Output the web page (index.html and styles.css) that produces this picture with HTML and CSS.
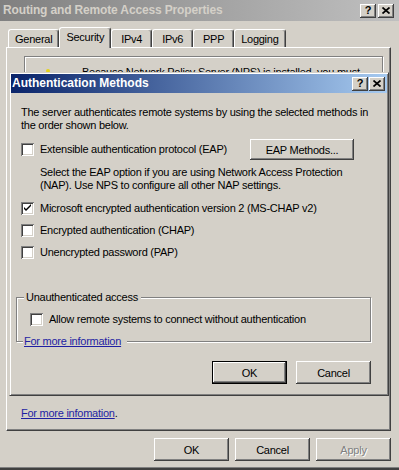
FILE: index.html
```html
<!DOCTYPE html>
<html lang="en">
<head>
<meta charset="UTF-8">
<title>Routing and Remote Access Properties</title>
<link rel="stylesheet" href="styles.css">
</head>
<body>
<div class="window">
    <div class="titlebar inactive">
        <span class="caption">Routing and Remote Access Properties</span>
        <div class="capbtns">
            <span class="capbtn">?</span>
            <span class="capbtn"><svg width="8" height="7" viewBox="0 0 8 7"><path d="M0.5 0.5 L7.5 6.5 M7.5 0.5 L0.5 6.5" stroke="#000" stroke-width="1.7"/></svg></span>
        </div>
    </div>

    <div class="tabs">
        <div class="tab">General</div>
        <div class="tab selected">Security</div>
        <div class="tab">IPv4</div>
        <div class="tab">IPv6</div>
        <div class="tab">PPP</div>
        <div class="tab">Logging</div>
    </div>

    <div class="panel">
        <div class="etched nps">
            <svg class="nps-icon" width="16" height="20" viewBox="0 0 16 20"><circle cx="8" cy="3" r="2" fill="#e6d21a"/><path d="M8 5 L15 18 H1 Z" fill="#e6d21a"/></svg>
            <p class="nps-text">Because Network Policy Server (NPS) is installed, you must</p>
        </div>
        <p class="panel-link"><a href="#">For more infomation</a>.</p>
    </div>

    <div class="footer">
        <button class="btn">OK</button>
        <button class="btn">Cancel</button>
        <button class="btn" disabled>Apply</button>
    </div>
</div>

<!-- modal dialog floating over the properties window -->
<div class="dialog">
    <div class="titlebar active">
        <span class="caption">Authentication Methods</span>
        <div class="capbtns">
            <span class="capbtn">?</span>
            <span class="capbtn"><svg width="8" height="7" viewBox="0 0 8 7"><path d="M0.5 0.5 L7.5 6.5 M7.5 0.5 L0.5 6.5" stroke="#000" stroke-width="1.7"/></svg></span>
        </div>
    </div>

    <div class="dlg-body">
        <p class="intro">The server authenticates remote systems by using the selected methods in<br>the order shown below.</p>

        <div class="eap-row">
            <label class="check"><span class="box"></span>Extensible authentication protocol (EAP)</label>
            <button class="btn wide">EAP Methods...</button>
        </div>
        <p class="note">Select the EAP option if you are using Network Access Protection<br>(NAP). Use NPS to configure all other NAP settings.</p>

        <label class="check row1"><span class="box"><svg width="13" height="13" viewBox="0 0 13 13"><path d="M3 5 V7 L5 9 L10 4 V2 L5 7 Z" fill="#000"/></svg></span>Microsoft encrypted authentication version 2 (MS-CHAP v2)</label>
        <label class="check row"><span class="box"></span>Encrypted authentication (CHAP)</label>
        <label class="check row"><span class="box"></span>Unencrypted password (PAP)</label>

        <div class="etched unauth">
            <span class="group-label">Unauthenticated access</span>
            <label class="check allow"><span class="box"></span>Allow remote systems to connect without authentication</label>
            <a href="#" class="group-link">For more information</a>
        </div>

        <div class="dlg-buttons">
            <button class="btn default">OK</button>
            <button class="btn">Cancel</button>
        </div>
    </div>
</div>
</body>
</html>
```

FILE: styles.css
```css
*{
    box-sizing: border-box;
}
body{
    margin: 0;
    width: 399px;
    height: 470px;
    overflow: hidden;
    position: relative;
    background-color: #d4d0c8;
    font-family: "Liberation Sans", Arial, sans-serif;
    font-size: 11px;
    line-height: 13px;
    letter-spacing: -0.25px;
    color: #000;
}
p{
    margin: 0;
}
a{
    color: #1f1fa3;
}

.window{
    height: 470px;
    border-bottom: 2px solid #404040;
    box-shadow: inset 0 -1px #808080;
}

/* title bars */
.titlebar{
    display: flex;
    align-items: center;
    justify-content: space-between;
}
.titlebar.inactive{
    height: 21px;
    padding: 0 5px 0 3px;
    background: linear-gradient(to right, #808080, #c0c0c0);
    color: #d4d0c8;
}
.titlebar.active{
    height: 19px;
    padding: 0 2px 0 1px;
    background: linear-gradient(to right, #0a246a, #a6caf0);
    color: #fff;
}
.caption{
    font-weight: bold;
    font-size: 12px;
    letter-spacing: 0;
}
.inactive .caption{
    letter-spacing: -0.15px;
}
.capbtns{
    display: flex;
    gap: 1px;
}
.inactive .capbtns{
    gap: 2px;
}
.capbtn{
    width: 16px;
    height: 14px;
    display: flex;
    align-items: center;
    justify-content: center;
    background-color: #d4d0c8;
    color: #000;
    font-weight: bold;
    font-size: 11px;
    letter-spacing: 0;
    box-shadow: inset -1px -1px #404040, inset 1px 1px #fff, inset -2px -2px #808080;
}

/* tabs */
.tabs{
    display: flex;
    align-items: flex-end;
    height: 20px;
    margin-top: 6px;
    padding-left: 8px;
}
.tab{
    height: 18px;
    min-width: 41px;
    padding: 3px 6px 0 6px;
    text-align: center;
    background-color: #d4d0c8;
    border-top: 1px solid #fff;
    border-left: 1px solid #fff;
    border-right: 1px solid #404040;
    border-radius: 3px 3px 0 0;
    box-shadow: inset -1px 0 #808080;
}
.tab.selected{
    height: 21px;
    margin-bottom: -1px;
    position: relative;
    z-index: 1;
}

.panel{
    display: flex;
    flex-direction: column;
    height: 384px;
    margin: 0 8px 0 6px;
    padding: 8px 7px 10px 14px;
    border-top: 1px solid #fff;
    border-left: 1px solid #fff;
    border-right: 1px solid #404040;
    border-bottom: 1px solid #404040;
    box-shadow: inset -1px -1px #808080;
}
.etched{
    border: 1px solid #808080;
    box-shadow: inset 1px 1px #fff, 1px 1px #fff;
}
.nps{
    display: flex;
    height: 120px;
    margin-left: 3px;
    padding: 9px 0 0 15px;
}
.nps-icon{
    margin-top: 2px;
}
.nps-text{
    margin-left: 26px;
}
.panel-link{
    margin-top: auto;
}

.footer{
    display: flex;
    justify-content: flex-end;
    gap: 6px;
    padding: 7px 8px 0 0;
}
.btn{
    width: 75px;
    height: 23px;
    padding: 0;
    border: none;
    background-color: #d4d0c8;
    font-family: "Liberation Sans", Arial, sans-serif;
    font-size: 11px;
    letter-spacing: inherit;
    color: #000;
    box-shadow: inset -1px -1px #404040, inset 1px 1px #fff, inset -2px -2px #808080, inset 2px 2px #d4d0c8;
}
.btn:disabled{
    color: #808080;
    text-shadow: 1px 1px #fff;
}
.btn.wide{
    width: 104px;
    height: 21px;
}
.btn.default{
    border: 1px solid #000;
}

/* dialog */
.dialog{
    position: absolute;
    left: 9px;
    top: 72px;
    width: 380px;
    height: 324px;
    padding: 1px;
    background-color: #d4d0c8;
    border: 1px solid;
    border-color: #d4d0c8 #404040 #404040 #d4d0c8;
    box-shadow: inset 1px 1px #fff, inset -1px -1px #808080;
    z-index: 2;
}
.dlg-body{
    display: flex;
    flex-direction: column;
    padding: 13px 16px 0 5px;
}
.intro{
    margin-left: 5px;
    white-space: nowrap;
}
.eap-row{
    display: flex;
    align-items: center;
    justify-content: space-between;
    height: 21px;
    margin: 7px 17px 0 5px;
}
.note{
    margin: 6px 0 0 24px;
    white-space: nowrap;
}
.check{
    display: flex;
    align-items: center;
    gap: 6px;
    height: 13px;
    white-space: nowrap;
}
.row1{
    margin: 10px 0 0 5px;
}
.row{
    margin: 9px 0 0 5px;
}
.box{
    width: 13px;
    height: 13px;
    flex: none;
    background-color: #fff;
    box-shadow: inset 1px 1px #808080, inset -1px -1px #fff, inset 2px 2px #404040, inset -2px -2px #d4d0c8;
}
.box svg{
    display: block;
}

.unauth{
    display: flex;
    flex-direction: column;
    align-items: flex-start;
    margin-top: 38px;
}
.group-label{
    margin: -7px 0 0 7px;
    padding: 0 3px 0 2px;
    background-color: #d4d0c8;
}
.allow{
    margin: 9px 0 0 13px;
}
.group-link{
    margin: 9px 0 -7px 6px;
    padding: 0 6px 0 1px;
    background-color: #d4d0c8;
}
.dlg-buttons{
    display: flex;
    justify-content: flex-end;
    gap: 9px;
    margin-top: 19px;
}
```
